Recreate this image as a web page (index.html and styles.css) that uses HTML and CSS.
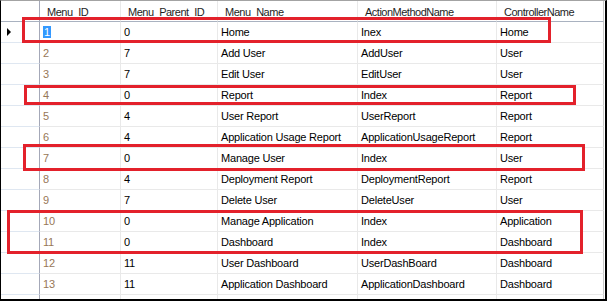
FILE: index.html
```html
<!DOCTYPE html>
<html>
    <head>
        <title>Menu table</title>
        <link rel="stylesheet" href="styles.css">
    </head>
    <body>
        <div class="grid-frame">
            <table class="grid">
                <colgroup>
                    <col class="c-head">
                    <col class="c-id">
                    <col class="c-parent">
                    <col class="c-name">
                    <col class="c-action">
                    <col class="c-ctrl">
                </colgroup>
                <thead>
                    <tr>
                        <th class="rowhead"></th>
                        <th>Menu<span class="us">_</span>ID</th>
                        <th>Menu<span class="us">_</span>Parent<span class="us">_</span>ID</th>
                        <th>Menu<span class="us">_</span>Name</th>
                        <th>ActionMethodName</th>
                        <th class="last">ControllerName</th>
                    </tr>
                </thead>
                <tbody>
                    <tr><td class="rowhead"><span class="cursor"></span></td><td class="id"><span class="selected">1</span></td><td>0</td><td>Home</td><td>Inex</td><td class="last">Home</td></tr>
                    <tr><td class="rowhead"></td><td class="id">2</td><td>7</td><td>Add User</td><td>AddUser</td><td class="last">User</td></tr>
                    <tr><td class="rowhead"></td><td class="id">3</td><td>7</td><td>Edit User</td><td>EditUser</td><td class="last">User</td></tr>
                    <tr><td class="rowhead"></td><td class="id">4</td><td>0</td><td>Report</td><td>Index</td><td class="last">Report</td></tr>
                    <tr><td class="rowhead"></td><td class="id">5</td><td>4</td><td>User Report</td><td>UserReport</td><td class="last">Report</td></tr>
                    <tr><td class="rowhead"></td><td class="id">6</td><td>4</td><td>Application Usage Report</td><td>ApplicationUsageReport</td><td class="last">Report</td></tr>
                    <tr><td class="rowhead"></td><td class="id">7</td><td>0</td><td>Manage User</td><td>Index</td><td class="last">User</td></tr>
                    <tr><td class="rowhead"></td><td class="id">8</td><td>4</td><td>Deployment Report</td><td>DeploymentReport</td><td class="last">Report</td></tr>
                    <tr><td class="rowhead"></td><td class="id">9</td><td>7</td><td>Delete User</td><td>DeleteUser</td><td class="last">User</td></tr>
                    <tr><td class="rowhead"></td><td class="id">10</td><td>0</td><td>Manage Application</td><td>Index</td><td class="last">Application</td></tr>
                    <tr><td class="rowhead"></td><td class="id">11</td><td>0</td><td>Dashboard</td><td>Index</td><td class="last">Dashboard</td></tr>
                    <tr><td class="rowhead"></td><td class="id">12</td><td>11</td><td>User Dashboard</td><td>UserDashBoard</td><td class="last">Dashboard</td></tr>
                    <tr><td class="rowhead"></td><td class="id">13</td><td>11</td><td>Application Dashboard</td><td>ApplicationDashboard</td><td class="last">Dashboard</td></tr>
                    <tr class="filler"><td class="rowhead"></td><td class="id"></td><td></td><td></td><td></td><td class="last"></td></tr>
                </tbody>
            </table>

            <!-- red highlight boxes drawn over the grid -->
            <div class="mark mark-home"></div>
            <div class="mark mark-report"></div>
            <div class="mark mark-user"></div>
            <div class="mark mark-app"></div>
        </div>
    </body>
</html>
```

FILE: styles.css
```css
:root {
    --grid-line: #e9e9e9;
    --head-line: #dfe7f1;
    --mark-red: #e3212b;
}


body {
    margin: 0;
    background-color: #ffffff;
    font-family: 'Liberation Sans', Arial, sans-serif;
}


.grid-frame {
    position: relative;
    width: 604px;
    height: 298px;
    overflow: hidden;
    border-left: 1px solid #000000;
    border-top: 1px solid #a3a3a3;
    border-right: 2px solid #000000;
    border-bottom: 2px solid #000000;
}

.grid {
    table-layout: fixed;
    border-collapse: separate;
    border-spacing: 0;
    width: 603px;
}
.grid col.c-head   { width: 39px; }
.grid col.c-id     { width: 81px; }
.grid col.c-parent { width: 97px; }
.grid col.c-name   { width: 140px; }
.grid col.c-action { width: 139px; }
.grid col.c-ctrl   { width: 107px; }


.grid th, .grid td {
    box-sizing: border-box;
    padding: 0;
    border-right: 1px solid var(--grid-line);
    border-bottom: 1px solid var(--grid-line);
    white-space: nowrap;
    overflow: hidden;
    text-align: left;
}

.grid th {
    height: 21px;
    padding-left: 7px;
    padding-top: 1px;
    font-weight: normal;
    font-size: 11px;
    letter-spacing: -0.5px;
    color: #1e1e1e;
    border-bottom-color: #a9b2c0;
    vertical-align: middle;
}
.grid th .us {
    color: transparent;
}

.grid td {
    height: 21px;
    padding-left: 3px;
    font-size: 11px;
    letter-spacing: -0.2px;
    color: #000000;
    vertical-align: middle;
}
.grid td.id {
    color: #977757;
}
.grid .last {
    border-right-color: #c8c8c8;
}

.grid .rowhead {
    padding-left: 0;
    border-right-color: #a4a8b8;
    border-bottom-color: var(--head-line);
}
.grid th.rowhead {
    border-bottom-color: #a9b2c0;
}

.cursor {
    display: block;
    width: 0;
    height: 0;
    margin-left: 6px;
    border-top: 4px solid transparent;
    border-bottom: 4px solid transparent;
    border-left: 4px solid #000000;
}

.selected {
    display: inline-block;
    padding: 0 1px;
    line-height: 12px;
    background-color: #3399ff;
    color: #ffffff;
}


.mark {
    position: absolute;
    box-sizing: border-box;
    border: 3px solid var(--mark-red);
}
.mark-home   { left: 21px; top: 16px;  width: 529px; height: 26px; }
.mark-report { left: 23px; top: 84px;  width: 552px; height: 20px; }
.mark-user   { left: 22px; top: 143px; width: 562px; height: 27px; }
.mark-app    { left: 6px;  top: 209px; width: 576px; height: 44px; }
```
